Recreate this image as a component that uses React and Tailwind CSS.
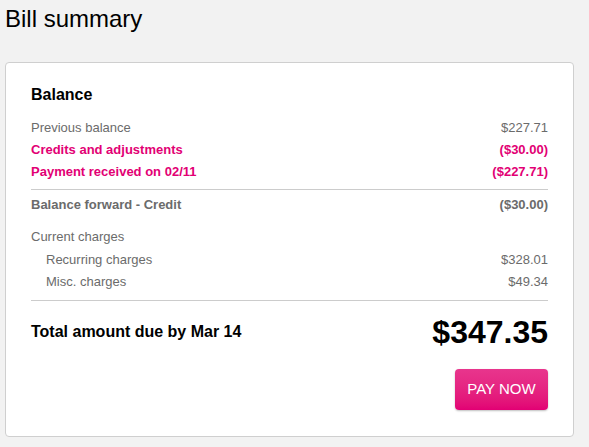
import React from 'react';

const FONT = { fontFamily: '"Liberation Sans", Arial, sans-serif' };

function Row({ label, value, className = '', indent = false }) {
  return (
    <div className={`flex items-center justify-between h-[22px] text-[13px] ${className}`}>
      <span className={indent ? 'pl-[15px]' : ''}>{label}</span>
      <span>{value}</span>
    </div>
  );
}

export default function App() {
  return (
    <div className="min-h-[447px] w-[589px] bg-[#f2f2f2] text-black" style={FONT}>
      <h1 className="pl-[5px] pt-[5px] text-[24px] leading-[28px] font-normal">Bill summary</h1>

      <div className="ml-[5px] mt-[29px] w-[569px] rounded-[4px] border border-[#cfcfcf] bg-white px-[25px] pt-[22px] pb-[26px]">
        <h2 className="text-[16px] leading-[20px] font-bold">Balance</h2>

        <div className="mt-[12px] text-[#6b6b6b]">
          <Row label="Previous balance" value="$227.71" />
          <Row label="Credits and adjustments" value="($30.00)" className="font-bold text-[#e20074]" />
          <Row label="Payment received on 02/11" value="($227.71)" className="font-bold text-[#e20074]" />
        </div>

        <div className="mt-[6px] border-t border-[#cccccc]" />

        <div className="mt-[4px] text-[#6b6b6b]">
          <Row label="Balance forward - Credit" value="($30.00)" className="font-bold" />
        </div>

        <div className="mt-[10px] text-[#6b6b6b]">
          <Row label="Current charges" value="" />
          <Row label="Recurring charges" value="$328.01" className="mt-[1px]" indent />
          <Row label="Misc. charges" value="$49.34" indent />
        </div>

        <div className="mt-[7px] border-t border-[#cccccc]" />

        <div className="mt-[11px] flex h-[40px] items-center justify-between">
          <span className="text-[16px] font-bold">Total amount due by Mar 14</span>
          <span className="text-[32px] font-bold leading-none">$347.35</span>
        </div>

        <div className="mt-[17px] flex justify-end">
          <button className="h-[41px] w-[93px] rounded-[4px] bg-gradient-to-b from-[#e8358d] to-[#e20074] text-[15px] text-white shadow-[0_1px_2px_rgba(0,0,0,0.25)]">
            PAY NOW
          </button>
        </div>
      </div>
    </div>
  );
}
